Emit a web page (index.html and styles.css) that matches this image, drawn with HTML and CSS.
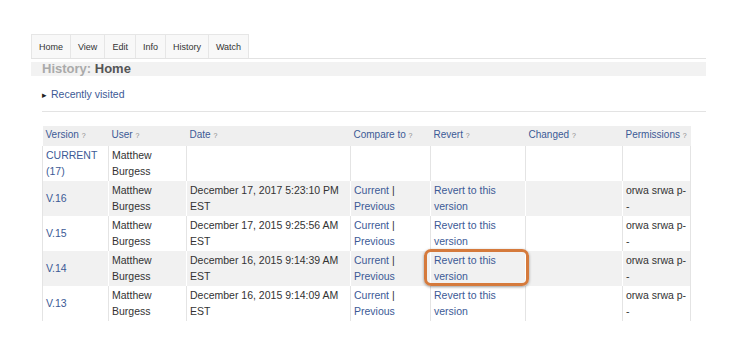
FILE: index.html
```html
<!DOCTYPE html>
<html lang="en">
<head>
    <meta charset="UTF-8">
    <title>History: Home</title>
    <link rel="stylesheet" href="styles.css">
</head>
<body>
    <div class="page">
        <div class="tabs">
            <span class="tab">Home</span>
            <span class="tab">View</span>
            <span class="tab">Edit</span>
            <span class="tab">Info</span>
            <span class="tab">History</span>
            <span class="tab">Watch</span>
        </div>

        <h1 class="page-title"><span class="title-label">History:</span> Home</h1>

        <div class="content">
            <div class="recent"><span class="arrow">&#9656;</span><a href="#">Recently visited</a></div>
            <div class="divider"></div>

            <table class="history">
                <colgroup>
                    <col style="width: 66px">
                    <col style="width: 78px">
                    <col style="width: 164px">
                    <col style="width: 80px">
                    <col style="width: 95px">
                    <col style="width: 97px">
                    <col style="width: 68px">
                </colgroup>
                <thead>
                    <tr>
                        <th>Version <span class="help">?</span></th>
                        <th>User <span class="help">?</span></th>
                        <th>Date <span class="help">?</span></th>
                        <th>Compare to <span class="help">?</span></th>
                        <th>Revert <span class="help">?</span></th>
                        <th>Changed <span class="help">?</span></th>
                        <th>Permissions <span class="help">?</span></th>
                    </tr>
                </thead>
                <tbody>
                    <tr>
                        <td class="top"><a href="#">CURRENT (17)</a></td>
                        <td>Matthew Burgess</td>
                        <td></td>
                        <td></td>
                        <td></td>
                        <td></td>
                        <td></td>
                    </tr>
                    <tr class="alt">
                        <td><a href="#">V.16</a></td>
                        <td>Matthew Burgess</td>
                        <td>December 17, 2017 5:23:10 PM EST</td>
                        <td><a href="#">Current</a> |<br><a href="#">Previous</a></td>
                        <td><a href="#">Revert to this version</a></td>
                        <td></td>
                        <td class="perms">orwa srwa p-<br>-</td>
                    </tr>
                    <tr>
                        <td><a href="#">V.15</a></td>
                        <td>Matthew Burgess</td>
                        <td>December 17, 2015 9:25:56 AM EST</td>
                        <td><a href="#">Current</a> |<br><a href="#">Previous</a></td>
                        <td><a href="#">Revert to this version</a></td>
                        <td></td>
                        <td class="perms">orwa srwa p-<br>-</td>
                    </tr>
                    <tr class="alt">
                        <td><a href="#">V.14</a></td>
                        <td>Matthew Burgess</td>
                        <td>December 16, 2015 9:14:39 AM EST</td>
                        <td><a href="#">Current</a> |<br><a href="#">Previous</a></td>
                        <td class="marked"><a href="#">Revert to this version</a><span class="highlight"></span></td>
                        <td></td>
                        <td class="perms">orwa srwa p-<br>-</td>
                    </tr>
                    <tr>
                        <td><a href="#">V.13</a></td>
                        <td>Matthew Burgess</td>
                        <td>December 16, 2015 9:14:09 AM EST</td>
                        <td><a href="#">Current</a> |<br><a href="#">Previous</a></td>
                        <td><a href="#">Revert to this version</a></td>
                        <td></td>
                        <td class="perms">orwa srwa p-<br>-</td>
                    </tr>
                </tbody>
            </table>
        </div>
    </div>
</body>
</html>
```

FILE: styles.css
```css
* {
    margin: 0;
    padding: 0;
    box-sizing: border-box;
}

body {
    background: white;
    color: #333;
    font-family: "Liberation Sans", Arial, sans-serif;
}

a {
    color: #3c5a96;
    text-decoration: none;
}

.page {
    width: 706px;
    padding: 34px 0 0 31px;
}

.tabs {
    display: flex;
    height: 25px;
    border-bottom: 1px solid #e2e2e2;
}

.tab {
    height: 24px;
    line-height: 24px;
    padding: 0 7px;
    font-size: 9px;
    color: #333;
    background: #f8f8f8;
    border: 1px solid #e6e6e6;
    border-bottom: none;
    margin-right: -1px;
}

.page-title {
    margin-top: 3px;
    height: 14px;
    line-height: 14px;
    background: #f2f2f2;
    padding-left: 11px;
    font-size: 13px;
    font-weight: bold;
    color: #555;
}

.title-label {
    color: #aaa;
}

.content {
    padding-left: 11px;
}

.recent {
    margin-top: 11px;
    height: 14px;
    line-height: 14px;
    font-size: 10.5px;
}

.arrow {
    font-size: 9px;
    color: #222;
    margin-right: 4px;
}

.divider {
    margin-top: 10px;
    border-top: 1px solid #e3e3e3;
}

.history {
    margin-top: 14px;
    width: 648px;
    table-layout: fixed;
    border-collapse: collapse;
    font-size: 10.5px;
    line-height: 16px;
}

.history th {
    height: 19px;
    background: #efefef;
    color: #3c5a96;
    font-weight: normal;
    text-align: left;
    padding: 1px 3px 2px;
    font-size: 10px;
    white-space: nowrap;
}

.help {
    font-size: 7px;
    color: #888;
}

.history td {
    padding: 1px 3px 2px;
    height: 35px;
    vertical-align: middle;
    border-left: 1px solid #e4e4e4;
    border-right: 1px solid #e4e4e4;
}

.history td.top {
    vertical-align: top;
}

.history td.perms {
    white-space: nowrap;
}

.history tr.alt td {
    background: #f1f1f1;
    border-left-color: #fff;
    border-right-color: #fff;
}

.history tr.alt td:first-child {
    border-left-color: #e4e4e4;
}

.history tr.alt td:last-child {
    border-right-color: #e4e4e4;
}

.marked {
    position: relative;
}

.highlight {
    position: absolute;
    left: -7px;
    top: -2px;
    width: 105px;
    height: 37px;
    border: 3px solid #d57a3c;
    border-radius: 7px;
    box-shadow: 0 1px 3px rgba(0, 0, 0, 0.4);
}
```
